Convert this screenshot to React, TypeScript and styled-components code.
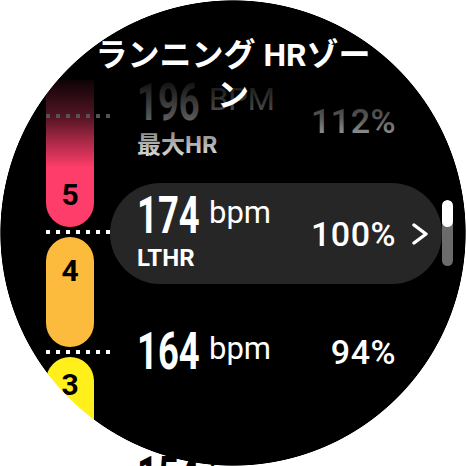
import React from "react";
import styled, { createGlobalStyle, css } from "styled-components";

const GlobalStyle = createGlobalStyle`
  html, body {
    margin: 0;
    padding: 0;
    background: #fff;
  }
  body {
    font-family: Roboto, "Noto Sans CJK JP", sans-serif;
  }
`;

type Level = 5 | 4 | 3;

const zoneColors: Record<Level, string> = {
  5: "#ff3d6b",
  4: "#fdbb3d",
  3: "#fff01c",
};

const zoneRadius: Record<Level, string> = {
  5: "0 0 24px 24px",
  4: "24px",
  3: "24px 24px 0 0",
};

const Screen = styled.div`
  position: relative;
  width: 466px;
  height: 466px;
  overflow: hidden;
  background: #000;
  color: #fff;
`;

const Title = styled.h1`
  position: absolute;
  top: 35px;
  left: 0;
  right: 0;
  z-index: 3;
  width: 290px;
  margin: 0 auto;
  font: 700 32px/40px Roboto, "Noto Sans CJK JP", sans-serif;
  text-align: center;
  color: #fff;
`;

const TopFade = styled.div`
  position: absolute;
  top: 0;
  left: 0;
  right: 0;
  height: 170px;
  z-index: 2;
  pointer-events: none;
  background: linear-gradient(
    to bottom,
    #000 0,
    #000 74px,
    rgba(0, 0, 0, 0.9) 86px,
    rgba(0, 0, 0, 0.66) 118px,
    rgba(0, 0, 0, 0.38) 138px,
    rgba(0, 0, 0, 0) 168px
  );
`;

const CornerMask = styled.div`
  position: absolute;
  inset: 0;
  z-index: 5;
  pointer-events: none;
  background: radial-gradient(circle 233px at 233px 233px, transparent 232.3px, #fff 233px);
`;

const Scroll = styled.div`
  position: absolute;
  left: 442px;
  top: 200px;
  z-index: 3;
  width: 11px;
  height: 66px;
  border-radius: 6px;
  overflow: hidden;
  background: #6b6b6b;

  &::before {
    content: "";
    display: block;
    height: 27px;
    border-radius: 6px;
    background: #fff;
  }
`;

const Body = styled.div`
  display: flex;
  align-items: flex-start;
  padding-left: 46px;
`;

const ZoneCol = styled.div`
  display: flex;
  flex-direction: column;
  flex-shrink: 0;
  width: 64px;
  padding-top: 80px;
`;

const Zone = styled.div<{ $level: Level; $h: number; $pad: number }>`
  position: relative;
  box-sizing: border-box;
  width: 48px;
  height: ${(p) => p.$h}px;
  padding-top: ${(p) => p.$pad}px;
  border-radius: ${(p) => zoneRadius[p.$level]};
  background: ${(p) => zoneColors[p.$level]};
  color: #000;
  font: 700 30px/30px Roboto, sans-serif;
  text-align: center;
`;

const dotted = (color: string) => css`
  height: 4px;
  width: 64px;
  background: repeating-linear-gradient(to right, ${color} 0 4px, transparent 4px 10px);
`;

const Dots = styled.div`
  display: flex;
  align-items: center;
  height: 10px;

  &::before {
    content: "";
    ${dotted("#fff")}
  }
`;

const MaxLine = styled.div`
  position: absolute;
  top: 34px;
  left: 0;
  ${dotted("#fff")}
`;

const RowsCol = styled.div`
  display: flex;
  flex-direction: column;
  gap: 17px;
  width: 332px;
  padding-top: 70px;

  & > :first-child {
    margin-bottom: -5px;
  }
  & > :last-child {
    margin-top: 6px;
  }
`;

const Row = styled.div<{ $active?: boolean; $ghost?: boolean }>`
  display: flex;
  align-items: center;
  flex-shrink: 0;
  box-sizing: border-box;
  height: 101px;
  padding: 0 14px 0 27px;
  border-radius: 51px;
  background: ${(p) => (p.$active ? "#262626" : "transparent")};
  color: ${(p) => (p.$ghost ? "#000" : "#fff")};
  ${(p) =>
    p.$ghost &&
    css`
      position: relative;
      z-index: 6;
    `}
`;

const Info = styled.div`
  display: flex;
  flex-direction: column;
`;

const NumLine = styled.div`
  display: flex;
  align-items: flex-start;
`;

const Big = styled.span`
  display: block;
  flex-shrink: 0;
  width: 61px;
  font: 700 52px/38px Roboto, sans-serif;
  white-space: nowrap;
  transform: scaleX(0.7);
  transform-origin: left center;
`;

const Unit = styled.span`
  margin-left: 11px;
  font: 400 31px/31px Roboto, sans-serif;
`;

const Label = styled.div`
  margin-top: 11px;
  font: 700 24px/24px Roboto, "Noto Sans CJK JP", sans-serif;
  white-space: nowrap;
`;

const Pct = styled.div`
  margin-left: auto;
  font: 500 34px/34px Roboto, sans-serif;
  letter-spacing: 0.5px;
`;

const Chevron = styled.svg<{ $show?: boolean }>`
  flex-shrink: 0;
  margin-left: 16px;
  visibility: ${(p) => (p.$show ? "visible" : "hidden")};
`;

type RowData = {
  value: string;
  unit: string;
  label?: string;
  pct?: string;
  active?: boolean;
  ghost?: boolean;
};

const rows: RowData[] = [
  { value: "196", unit: "BPM", label: "最大HR", pct: "112%" },
  { value: "174", unit: "bpm", label: "LTHR", pct: "100%", active: true },
  { value: "164", unit: "bpm", pct: "94%" },
  { value: "154", unit: "bpm", ghost: true },
];

export default function App() {
  return (
    <>
      <GlobalStyle />
      <Screen>
        <Title>ランニング HRゾーン</Title>
        <Body>
          <ZoneCol>
            <Zone $level={5} $h={147} $pad={100}>
              <MaxLine />5
            </Zone>
            <Dots />
            <Zone $level={4} $h={110} $pad={19}>
              4
            </Zone>
            <Dots />
            <Zone $level={3} $h={120} $pad={13}>
              3
            </Zone>
          </ZoneCol>
          <RowsCol>
            {rows.map((r) => (
              <Row key={r.value} $active={r.active} $ghost={r.ghost}>
                <Info>
                  <NumLine>
                    <Big>{r.value}</Big>
                    <Unit>{r.unit}</Unit>
                  </NumLine>
                  {r.label && <Label>{r.label}</Label>}
                </Info>
                <Pct>{r.pct}</Pct>
                <Chevron $show={r.active} width="16" height="22" viewBox="0 0 16 22">
                  <polyline
                    points="2,2 14,11 2,20"
                    fill="none"
                    stroke="#fff"
                    strokeWidth="3.4"
                    strokeLinecap="round"
                    strokeLinejoin="round"
                  />
                </Chevron>
              </Row>
            ))}
          </RowsCol>
        </Body>
        <TopFade />
        <Scroll />
        <CornerMask />
      </Screen>
    </>
  );
}
